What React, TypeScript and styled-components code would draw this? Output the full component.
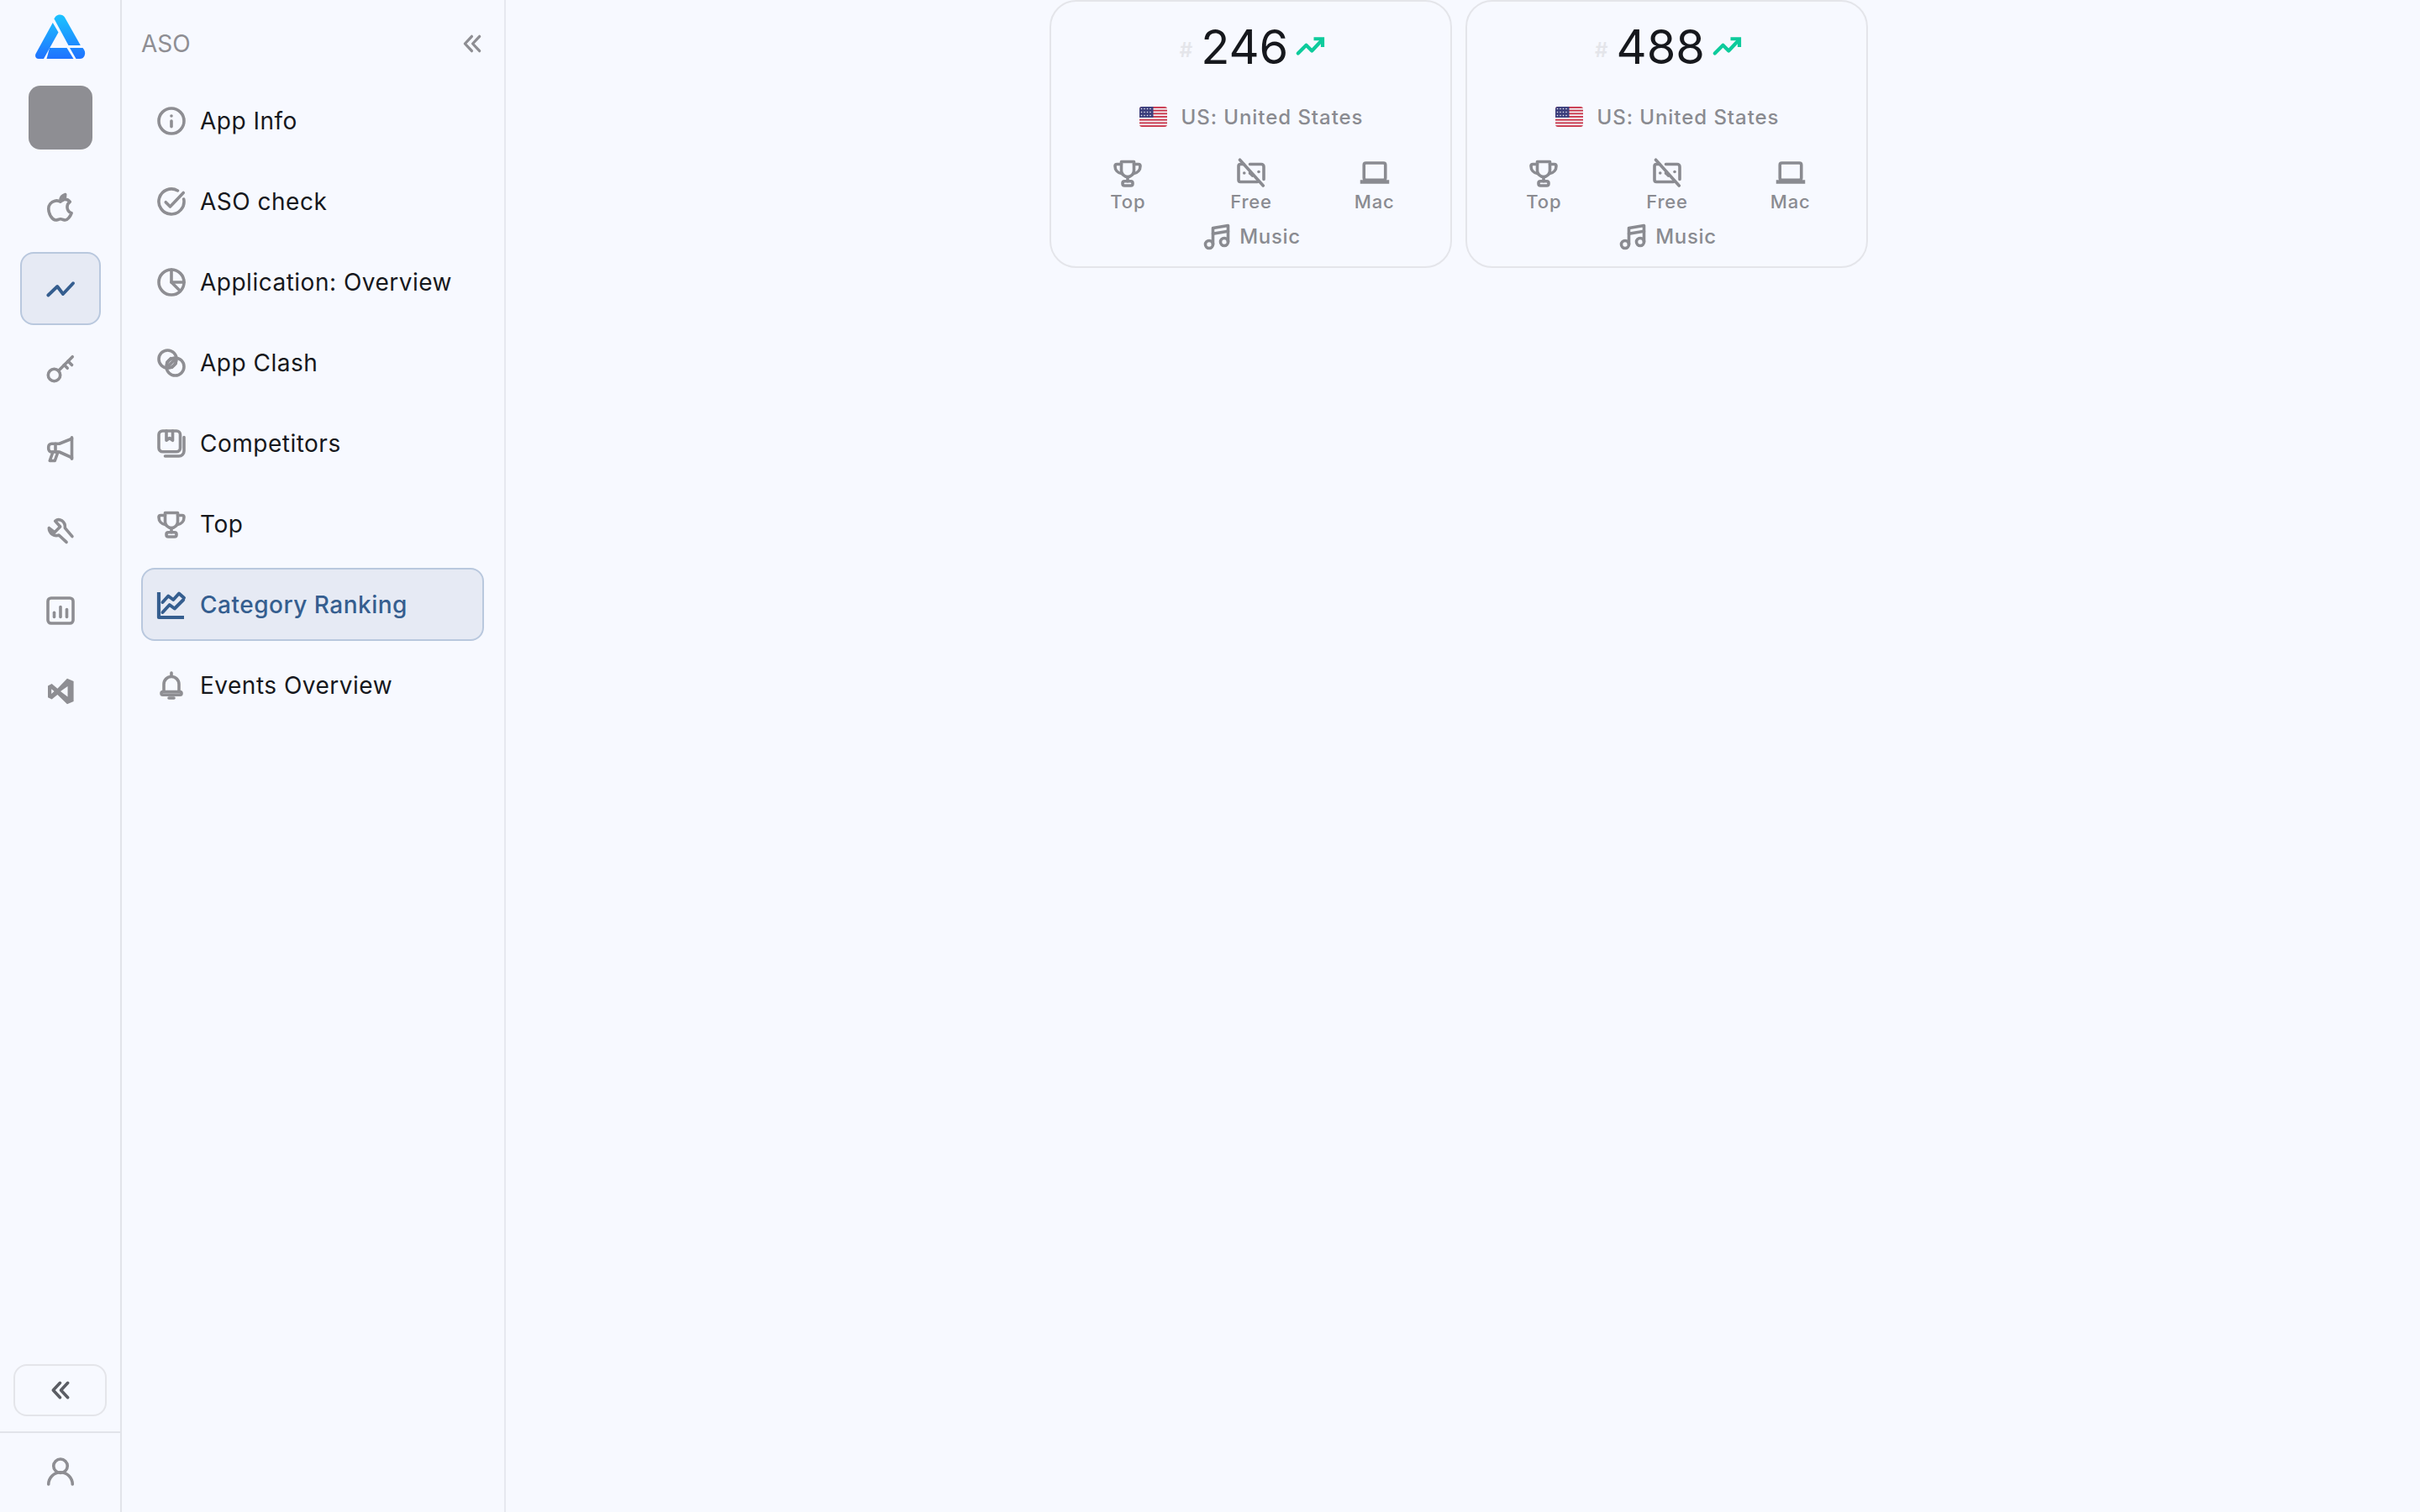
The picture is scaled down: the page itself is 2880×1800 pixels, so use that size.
import { ReactNode } from "react";
import styled, { createGlobalStyle } from "styled-components";

const GlobalStyle = createGlobalStyle`
  html, body {
    margin: 0;
    padding: 0;
    height: 100%;
    background: #f7f9ff;
    font-family: Inter, "Noto Sans", sans-serif;
  }
  * { box-sizing: border-box; }
`;

const Page = styled.div`
  display: flex;
  width: 2880px;
  height: 1800px;
  overflow: hidden;
  background: #f7f9ff;
`;

const Rail = styled.aside`
  width: 145px;
  flex: none;
  display: flex;
  flex-direction: column;
  align-items: center;
  border-right: 2px solid #e2e4ea;
`;

const LogoMark = styled.svg`
  width: 60px;
  height: 54px;
  margin-top: 17px;
  flex: none;
`;

const AppThumb = styled.div`
  width: 76px;
  height: 76px;
  margin-top: 31px;
  border-radius: 14px;
  background: #8e8e93;
`;

const RailItems = styled.nav`
  display: flex;
  flex-direction: column;
  gap: 9px;
  margin-top: 26px;
`;

const RailItem = styled.div<{ $active?: boolean }>`
  width: 96px;
  height: 87px;
  display: flex;
  align-items: center;
  justify-content: center;
  padding-bottom: ${(p) => (p.$active ? 0 : 2)}px;
  border-radius: 16px;
  border: 2px solid ${(p) => (p.$active ? "#b9c8de" : "transparent")};
  background: ${(p) => (p.$active ? "#e6eaf4" : "transparent")};
  color: ${(p) => (p.$active ? "#355e8f" : "#8e8e93")};
`;

const RailFooter = styled.div`
  margin-top: auto;
  width: 100%;
  display: flex;
  flex-direction: column;
  align-items: center;
`;

const CollapseButton = styled.div`
  width: 111px;
  height: 62px;
  display: flex;
  align-items: center;
  justify-content: center;
  border: 2px solid #e4e5ea;
  border-radius: 16px;
  color: #5b5d64;
`;

const UserRow = styled.div`
  width: 100%;
  height: 96px;
  margin-top: 18px;
  padding-bottom: 2px;
  display: flex;
  align-items: center;
  justify-content: center;
  border-top: 2px solid #e2e4ea;
  color: #8e8e93;
`;

const Sidebar = styled.aside`
  width: 457px;
  flex: none;
  padding: 0 24px 0 23px;
  border-right: 2px solid #e6e8ef;
`;

const SidebarHeader = styled.header`
  height: 100px;
  padding: 4px 1px 0 0;
  display: flex;
  align-items: center;
  justify-content: space-between;
  font-size: 28px;
  color: #8e8e93;
`;

const SidebarNav = styled.nav`
  display: flex;
  flex-direction: column;
  gap: 9px;
`;

const NavItem = styled.div<{ $active?: boolean }>`
  height: 87px;
  display: flex;
  align-items: center;
  gap: 16px;
  padding-left: 16px;
  border-radius: 16px;
  border: 2px solid ${(p) => (p.$active ? "#b9c8de" : "transparent")};
  background: ${(p) => (p.$active ? "#e6eaf4" : "transparent")};
  font-size: 28px;
  letter-spacing: 0.5px;
  font-weight: ${(p) => (p.$active ? 500 : 400)};
  color: ${(p) => (p.$active ? "#355e8f" : "#16181d")};
`;

const NavIcon = styled.span<{ $active?: boolean }>`
  display: flex;
  color: ${(p) => (p.$active ? "#355e8f" : "#8e8e93")};
`;

const Main = styled.main`
  flex: 1;
  display: flex;
  justify-content: center;
  align-items: flex-start;
  gap: 16px;
  padding-right: 10px;
`;

const Card = styled.section`
  width: 479px;
  height: 319px;
  padding: 0 17px 0 18px;
  display: flex;
  flex-direction: column;
  align-items: center;
  border: 2px solid #e4e5ea;
  border-radius: 32px;
`;

const RankRow = styled.div`
  height: 56px;
  margin-top: 26px;
  padding-left: 3px;
  display: flex;
  align-items: center;
  color: #16181d;
`;

const Hash = styled.span`
  font-size: 24px;
  font-weight: 600;
  color: #e4e5ea;
  margin-right: 10px;
  padding-top: 6px;
`;

const RankValue = styled.span`
  font-size: 56px;
  line-height: 56px;
  font-weight: 400;
`;

const TrendIcon = styled.span`
  display: flex;
  margin-left: 8px;
  color: #0dcb9c;
`;

const CountryRow = styled.div`
  height: 30px;
  margin-top: 40px;
  display: flex;
  align-items: center;
  gap: 17px;
  font-size: 24px;
  font-weight: 500;
  letter-spacing: 0.95px;
  color: #8a8b91;
`;

const Flag = styled.svg`
  width: 33px;
  height: 24px;
  flex: none;
`;

const MetaGrid = styled.div`
  width: 100%;
  margin-top: 34px;
  display: grid;
  grid-template-columns: repeat(3, 1fr);
`;

const MetaCell = styled.div`
  display: flex;
  flex-direction: column;
  align-items: center;
  gap: 3px;
  font-size: 22px;
  line-height: 26px;
  font-weight: 500;
  letter-spacing: 0.8px;
  color: #8a8b91;
`;

const GenreRow = styled.div`
  display: flex;
  align-items: center;
  gap: 9px;
  margin-top: 11px;
  font-size: 24px;
  line-height: 32px;
  font-weight: 500;
  letter-spacing: 0.7px;
  color: #8a8b91;
`;

function Icon({
  children,
  size = 36,
  stroke = 2.4,
}: {
  children: ReactNode;
  size?: number;
  stroke?: number;
}) {
  return (
    <svg
      width={size}
      height={size}
      viewBox="0 0 24 24"
      fill="none"
      stroke="currentColor"
      strokeWidth={stroke}
      strokeLinecap="round"
      strokeLinejoin="round"
    >
      {children}
    </svg>
  );
}

const trophy = (
  <>
    <path d="M7 3h10v7a5 5 0 0 1-10 0z" />
    <path d="M7 5H3.500A1.500 1.500 0 0 0 2 6.500C2 9.500 4 12 7.500 12.500" />
    <path d="M17 5h3.500A1.500 1.500 0 0 1 22 6.500c0 3-2 5.500-5.500 6" />
    <path d="M12 15v3.500" />
    <rect x="8" y="18.500" width="8" height="3.500" rx="1.500" />
  </>
);

const chevrons = (
  <>
    <path d="M11.500 4 4 12l7.500 8" />
    <path d="M20 4l-7.500 8 7.500 8" />
  </>
);

const railIcons: { key: string; active?: boolean; icon: ReactNode }[] = [
  {
    key: "apple",
    icon: (
      <>
        <path d="M12 7.500c-1.500-.9-3-1.200-4.500-.7C4.500 7.600 2.500 10 2.500 13c0 4 2.800 9 5.800 9 1.300 0 2.200-.8 3.700-.8s2.400.8 3.700.8c1.900 0 4-2.800 5-5.500-2.200-1-3.400-2.700-3.400-4.900 0-1.700.8-3.100 2.200-4.100-1.100-1.300-3-2.100-4.400-1.800-1.300.3-2.300 1.300-3.100 1.300z" />
        <path d="M12 6.500c0-2.300 1.300-4 3.800-4.800.2 2.500-1.300 4.800-3.800 4.800z" />
      </>
    ),
  },
  {
    key: "trend",
    active: true,
    icon: <path d="M2.200 17 9.500 10l4.500 6 8-8.500" strokeWidth="2.600" />,
  },
  {
    key: "key",
    icon: (
      <>
        <circle cx="7" cy="17" r="4.800" />
        <path d="M10.500 13.500 21.500 2.500" />
        <path d="M18 6l3 3" />
        <path d="M15 9l2.500 2.500" />
      </>
    ),
  },
  {
    key: "megaphone",
    icon: (
      <>
        <path d="M21 2.500v17" />
        <path d="M21 3.500 11 7.500H5A2.500 2.500 0 0 0 2.500 10v1.500A2.500 2.500 0 0 0 5 14h6l10 4.500" />
        <path d="M10 14 7.500 21H3.500l2.500-7" />
        <path d="M8 7.500v6.500" />
      </>
    ),
  },
  {
    key: "wrench",
    icon: (
      <path d="M2.900 10.400 7.300 13.800 11.800 9.300 7.800 4.900C11 2 16 5 15.600 10.400L21.300 17.100M2.900 10.400C2.800 14.500 7 17.500 10.700 16L16.700 21.600" />
    ),
  },
  {
    key: "stats",
    icon: (
      <>
        <rect x="2" y="2" width="20" height="20" rx="2.500" />
        <path d="M7 13.500V17" />
        <path d="M12 9v8" />
        <path d="M17 11v6" />
      </>
    ),
  },
  {
    key: "vscode",
    icon: (
      <path
        fill="currentColor"
        stroke="none"
        fillRule="evenodd"
        d="M2 7.600 5.100 6 9.600 9.800 17.300 1.800 22.400 4V20L17.300 22.200 9.600 14.700 5.100 18.400 2 16.900ZM4.800 10.200V14L7 12ZM17.700 8V16.300L12 12Z"
      />
    ),
  },
];

const navItems: { label: string; active?: boolean; icon: ReactNode }[] = [
  {
    label: "App Info",
    icon: (
      <>
        <circle cx="12" cy="12" r="10" />
        <path d="M12 16.500v-4.500" />
        <path d="M12 8h.01" />
      </>
    ),
  },
  {
    label: "ASO check",
    icon: (
      <>
        <path d="M21.800 10A10 10 0 1 1 17 3.300" />
        <path d="M7.500 12.500 11 16 21.500 5" />
      </>
    ),
  },
  {
    label: "Application: Overview",
    icon: (
      <>
        <circle cx="12" cy="12" r="10" />
        <path d="M12 2v10h10" />
        <path d="M12 12l7 7" />
      </>
    ),
  },
  {
    label: "App Clash",
    icon: (
      <>
        <circle cx="9" cy="9" r="7" />
        <circle cx="15" cy="15" r="7" />
        <path d="M8.500 11.500 11.500 8.500" />
        <path d="M12.500 15.500 15.500 12.500" />
        <path d="M10 14l4-4" />
      </>
    ),
  },
  {
    label: "Competitors",
    icon: (
      <>
        <rect x="2" y="2" width="17" height="16.500" rx="3" />
        <path d="M8 2v7.500l2.500-1.800L13 9.500V2" />
        <path d="M22 7v11a4 4 0 0 1-4 4H7" />
      </>
    ),
  },
  { label: "Top", icon: trophy },
  {
    label: "Category Ranking",
    active: true,
    icon: (
      <>
        <path d="M2 2v20h20" strokeLinecap="butt" strokeWidth="2.800" />
        <path d="M5 10 9.500 5l4 3 4.500-5 4 3.500" strokeWidth="2.600" />
        <path d="M5 18l5.500-6 4 3 7-7" strokeWidth="2.600" />
      </>
    ),
  },
  {
    label: "Events Overview",
    icon: (
      <>
        <path d="M12 2v2" />
        <path d="M6 17v-6a6 6 0 0 1 12 0v6" />
        <rect x="4" y="17" width="16" height="2.500" rx="1.200" />
        <path d="M10 22h4" />
      </>
    ),
  },
];

const metaItems: { label: string; icon: ReactNode }[] = [
  { label: "Top", icon: trophy },
  {
    label: "Free",
    icon: (
      <>
        <path d="M6 5H3.500A1.500 1.500 0 0 0 2 6.500v11A1.500 1.500 0 0 0 3.500 19H17" />
        <path d="M11 5h9a2 2 0 0 1 2 2v10" />
        <path d="M3 1.500 21.500 22" />
        <path d="M6.500 12h.01" />
        <path d="M18 11h.01" />
        <path d="M13 14l-2-2" />
      </>
    ),
  },
  {
    label: "Mac",
    icon: (
      <>
        <rect x="3.500" y="4" width="17" height="13.500" rx="1.500" />
        <path d="M0.500 19h23" strokeWidth="3" strokeLinecap="butt" />
      </>
    ),
  },
];

function RankCard({ rank }: { rank: number }) {
  return (
    <Card>
      <RankRow>
        <Hash>#</Hash>
        <RankValue>{rank}</RankValue>
        <TrendIcon>
          <Icon stroke={2.8}>
            <path d="M2.500 17 9 10.500l4.500 4.500 8-8.500" />
            <path d="M15 5.500h7V12" strokeLinecap="butt" strokeLinejoin="miter" />
          </Icon>
        </TrendIcon>
      </RankRow>
      <CountryRow>
        <Flag viewBox="0 0 33 24">
          <defs>
            <clipPath id={`flag-${rank}`}>
              <rect width="33" height="24" rx="3" />
            </clipPath>
          </defs>
          <g clipPath={`url(#flag-${rank})`}>
            <rect width="33" height="24" fill="#f4f3f6" />
            {[0, 2, 4, 6, 8, 10, 12].map((i) => (
              <rect key={i} y={(i * 24) / 13} width="33" height={24 / 13} fill="#c8344a" />
            ))}
            <rect width="16.500" height="13" fill="#3d3f7d" />
            {[2.500, 6.500, 10.500].map((y) =>
              [2.500, 6, 9.500, 13].map((x) => (
                <circle key={`${x}-${y}`} cx={x} cy={y} r="0.800" fill="#e8e8f2" />
              )),
            )}
          </g>
        </Flag>
        US: United States
      </CountryRow>
      <MetaGrid>
        {metaItems.map((item) => (
          <MetaCell key={item.label}>
            <Icon>{item.icon}</Icon>
            {item.label}
          </MetaCell>
        ))}
      </MetaGrid>
      <GenreRow>
        <Icon>
          <path d="M9 18V5l12-2v13" />
          <path d="M9 9.500l12-2" />
          <circle cx="6" cy="18" r="3" />
          <circle cx="18" cy="16" r="3" />
        </Icon>
        Music
      </GenreRow>
    </Card>
  );
}

export default function App() {
  return (
    <Page>
      <GlobalStyle />
      <Rail>
        <LogoMark viewBox="43 17 60 54">
          <defs>
            <linearGradient id="logo-top" gradientUnits="userSpaceOnUse" x1="0" y1="17" x2="0" y2="70">
              <stop offset="0" stopColor="#1cc4ff" />
              <stop offset="1" stopColor="#1f72ff" />
            </linearGradient>
          </defs>
          <path
            fill="url(#logo-top)"
            d="M65.500 22.500C67 17 75 15.500 78 20.500L96.800 54H82.500Z"
          />
          <path fill="url(#logo-top)" d="M63.800 27 70.500 38.500 53 70H47C43.500 70 42 66.500 43.800 63.500Z" />
          <path fill="url(#logo-top)" d="M60 57H80.500L88.500 70H56.500Z" />
          <path fill="url(#logo-top)" d="M84 57H99.500C102 60 103 63 101.500 66.500 100.500 69 98.500 70 96 70H91.500Z" />
        </LogoMark>
        <AppThumb />
        <RailItems>
          {railIcons.map((item) => (
            <RailItem key={item.key} $active={item.active}>
              <Icon>{item.icon}</Icon>
            </RailItem>
          ))}
        </RailItems>
        <RailFooter>
          <CollapseButton>
            <Icon size={26} stroke={3.4}>
              {chevrons}
            </Icon>
          </CollapseButton>
          <UserRow>
            <Icon>
              <circle cx="12" cy="7.500" r="5.500" />
              <path d="M2.500 22a9.500 9.500 0 0 1 19 0" />
            </Icon>
          </UserRow>
        </RailFooter>
      </Rail>
      <Sidebar>
        <SidebarHeader>
          ASO
          <Icon size={26} stroke={3}>
            {chevrons}
          </Icon>
        </SidebarHeader>
        <SidebarNav>
          {navItems.map((item) => (
            <NavItem key={item.label} $active={item.active}>
              <NavIcon $active={item.active}>
                <Icon>{item.icon}</Icon>
              </NavIcon>
              {item.label}
            </NavItem>
          ))}
        </SidebarNav>
      </Sidebar>
      <Main>
        <RankCard rank={246} />
        <RankCard rank={488} />
      </Main>
    </Page>
  );
}
